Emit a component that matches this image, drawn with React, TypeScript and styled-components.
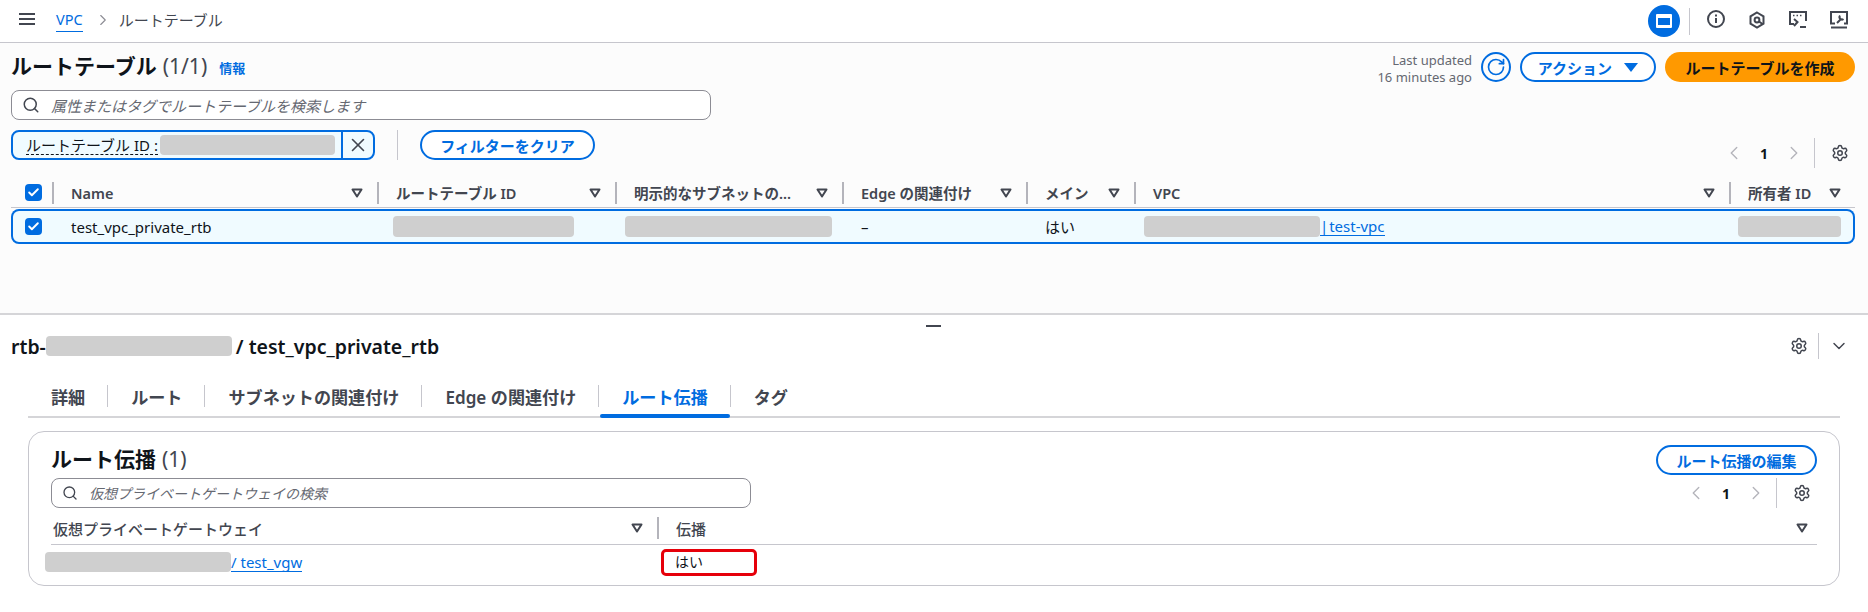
import React from 'react';
import styled, { createGlobalStyle } from 'styled-components';
import { Search, Settings, ChevronLeft, ChevronRight, ChevronDown, X, RotateCw, Check } from 'lucide-react';

const GlobalStyle = createGlobalStyle`
  html, body { margin: 0; padding: 0; background: #fff; overflow: hidden; }
  body { font-family: "Noto Sans", "Noto Sans CJK JP", sans-serif; color: #0f141a; }
  * { box-sizing: border-box; }
`;

const Page = styled.div`
  width: 1868px;
  height: 612px;
  display: flex;
  flex-direction: column;
`;

// Top bar
const TopBar = styled.header`
  height: 43px;
  flex: none;
  display: flex;
  align-items: center;
  padding: 0 18px 3px 19px;
  background: #fff;
  border-bottom: 1px solid #c6c6cd;
`;

const Burger = styled.div`
  width: 16px;
  height: 12px;
  border-top: 2px solid #424650;
  border-bottom: 2px solid #424650;
  position: relative;
  margin: -2px 21px 0 0;
  &::after {
    content: '';
    position: absolute;
    left: 0;
    right: 0;
    top: 3px;
    height: 2px;
    background: #424650;
  }
`;

const Crumb = styled.a`
  font-size: 14.5px;
  color: #006ce0;
  padding-bottom: 2px;
  border-bottom: 1px solid #006ce0;
  margin-top: 2px;
`;

const CrumbCurrent = styled.span`
  font-size: 15px;
  color: #424650;
`;

const CrumbSep = styled.span`
  display: flex;
  color: #8c8c94;
  margin: 0 7px 0 11px;
`;

const Spacer = styled.div`
  flex: 1;
`;

const PanelToggle = styled.div`
  width: 32px;
  height: 32px;
  border-radius: 50%;
  background: #006ce0;
  display: flex;
  align-items: center;
  justify-content: center;
  margin-top: 3px;
  &::before {
    content: '';
    box-sizing: border-box;
    width: 16px;
    height: 14px;
    border: 2px solid #fff;
    border-top-width: 4px;
    border-bottom-width: 3px;
    border-radius: 1px;
  }
`;

const NavDivider = styled.div`
  width: 1px;
  height: 27px;
  background: #c6c6cd;
  margin: 3px 15px 0 9px;
`;

const NavIcons = styled.div`
  display: flex;
  gap: 19px;
  color: #424650;
`;

const NavIcon = styled.svg`
  width: 22px;
  height: 22px;
  fill: none;
  stroke: #424650;
  stroke-width: 2;
`;

// Upper panel
const ListPanel = styled.section`
  height: 272px;
  flex: none;
  background: #fcfcfc;
  border-bottom: 2px solid #d5d5d8;
  padding: 9px 13px 0 11px;
`;

const HeadRow = styled.div`
  display: flex;
  align-items: flex-start;
  height: 30px;
`;

const Title = styled.h1`
  margin: 0;
  font-size: 21px;
  line-height: 28px;
  font-weight: 700;
  color: #0f141a;
`;

const Count = styled.span`
  font-weight: 400;
  color: #424650;
  margin-left: 6px;
`;

const InfoLink = styled.a`
  font-size: 13px;
  font-weight: 700;
  color: #006ce0;
  margin: 6px 0 0 12px;
`;

const Updated = styled.div`
  font-size: 13px;
  line-height: 17px;
  color: #656871;
  text-align: right;
  margin-right: 9px;
`;

const RoundIcon = styled.div`
  width: 30px;
  height: 30px;
  border: 2px solid #006ce0;
  border-radius: 50%;
  color: #006ce0;
  display: flex;
  align-items: center;
  justify-content: center;
  margin-right: 9px;
`;

const OutlineButton = styled.button<{ $width: number }>`
  width: ${({ $width }) => $width}px;
  height: 30px;
  flex: none;
  border: 2px solid #006ce0;
  border-radius: 20px;
  background: #fff;
  color: #006ce0;
  font: 600 15px "Noto Sans", "Noto Sans CJK JP", sans-serif;
  display: inline-flex;
  align-items: center;
  justify-content: center;
  gap: 12px;
  padding: 0;
`;

const PrimaryButton = styled.button`
  width: 190px;
  height: 30px;
  margin-left: 9px;
  border: none;
  border-radius: 20px;
  background: #ff9900;
  color: #0f141a;
  font: 600 15px "Noto Sans", "Noto Sans CJK JP", sans-serif;
`;

const FilledCaret = styled.span`
  width: 0;
  height: 0;
  border-left: 7px solid transparent;
  border-right: 7px solid transparent;
  border-top: 9px solid #006ce0;
`;

const SearchBox = styled.div<{ $top: number }>`
  width: 700px;
  height: 30px;
  margin-top: ${({ $top }) => $top}px;
  border: 1.5px solid #8c8c94;
  border-radius: 8px;
  background: #fff;
  display: flex;
  align-items: center;
  gap: 11px;
  padding: 0 10px;
  color: #424650;
`;

const Placeholder = styled.span<{ $size: number }>`
  font-size: ${({ $size }) => $size}px;
  font-style: italic;
  color: #656871;
`;

const FilterRow = styled.div`
  display: flex;
  align-items: flex-start;
  margin-top: 10px;
  height: 51px;
`;

const Token = styled.div`
  width: 364px;
  height: 30px;
  display: flex;
  border: 2px solid #006ce0;
  border-radius: 8px;
  background: #f0fbff;
  overflow: hidden;
`;

const TokenLabel = styled.div`
  flex: 1;
  display: flex;
  align-items: center;
  padding-left: 13px;
  font-size: 15px;
  color: #0f141a;
`;

const Dotted = styled.span`
  border-bottom: 1px dashed #0f141a;
  line-height: 18px;
  white-space: nowrap;
  margin-right: 2px;
`;

const TokenClose = styled.div`
  width: 32px;
  border-left: 2px solid #006ce0;
  display: flex;
  align-items: center;
  justify-content: center;
  color: #424650;
`;

const FilterDivider = styled.div`
  width: 1px;
  height: 30px;
  background: #c6c6cd;
  margin: 0 22px;
`;

const Redact = styled.span<{ $width: number; $height?: number }>`
  display: inline-block;
  flex: none;
  width: ${({ $width }) => $width}px;
  height: ${({ $height }) => $height || 21}px;
  background: #cfcfcf;
  border-radius: 4px;
  vertical-align: middle;
`;

const TitleRedact = styled(Redact)`
  margin-right: 4px;
`;

const Pager = styled.div<{ $top: number }>`
  display: flex;
  align-items: center;
  height: 30px;
  margin: ${({ $top }) => $top}px 6px 0 0;
  color: #b4b4bb;
`;

const PageNum = styled.span`
  font-size: 14px;
  font-weight: 700;
  color: #0f141a;
  margin: 0 15px;
`;

const PagerDivider = styled.div`
  width: 1px;
  height: 30px;
  background: #c6c6cd;
  margin: 0 16px 0 9px;
`;

const GearIcon = styled(Settings)`
  color: #424650;
  flex: none;
`;

// Table
const Grid = styled.div<{ $columns: string }>`
  display: grid;
  grid-template-columns: ${({ $columns }) => $columns};
  align-items: center;
`;

const HeadGrid = styled(Grid)`
  height: 27px;
  border-bottom: 1px solid #c6c6cd;
  padding-bottom: 3px;
`;

const HeadCell = styled.div`
  display: flex;
  align-items: center;
  justify-content: space-between;
  height: 22px;
  padding: 0 14px 0 17px;
  font-size: 14.5px;
  font-weight: 600;
  color: #424650;
  white-space: nowrap;
  border-left: 2px solid #b4b4bb;
`;

const CheckCell = styled.div`
  display: flex;
  align-items: center;
  padding-left: 14px;
`;

const CheckBox = styled.span`
  width: 17px;
  height: 17px;
  border-radius: 4px;
  background: #006ce0;
  color: #fff;
  display: flex;
  align-items: center;
  justify-content: center;
`;

const RowGrid = styled(Grid)`
  height: 35px;
  margin-top: 1px;
  border-radius: 8px;
  background: #f0fbff;
  box-shadow: inset 0 0 0 2px #006ce0;
`;

const RowCell = styled.div<{ $pad?: number }>`
  display: flex;
  align-items: center;
  padding-left: ${({ $pad }) => ($pad === undefined ? 19 : $pad)}px;
  font-size: 15px;
  color: #0f141a;
  white-space: nowrap;
`;

const Link = styled.a`
  color: #006ce0;
  font-size: 15px;
  border-bottom: 1px solid #006ce0;
  line-height: 18px;
`;

const VpcLink = styled(Link)`
  word-spacing: -3px;
`;

// Lower panel
const Handle = styled.div`
  width: 15px;
  height: 2px;
  background: #424650;
  margin: 10px auto 0;
  flex: none;
  position: relative;
  left: -1px;
`;

const Detail = styled.section`
  flex: 1;
  padding: 0 28px 0 11px;
`;

const DetailHead = styled.div`
  display: flex;
  align-items: center;
  height: 34px;
  margin-top: 2px;
`;

const DetailTitle = styled.h2`
  margin: 0;
  font-size: 19.5px;
  font-weight: 600;
  display: flex;
  align-items: center;
  color: #0f141a;
`;

const DetailTools = styled.div`
  display: flex;
  align-items: center;
  color: #424650;
  margin-right: -9px;
`;

const ToolDivider = styled.div`
  width: 1px;
  height: 26px;
  background: #c6c6cd;
  margin: 0 10px;
`;

const Tabs = styled.nav`
  display: flex;
  height: 41px;
  margin: 14px 0 0 17px;
  border-bottom: 2px solid #d5d5d8;
`;

const Tab = styled.div<{ $active?: boolean; $last?: boolean }>`
  position: relative;
  height: 39px;
  padding: 0 23px;
  display: flex;
  align-items: center;
  font-size: 17.1px;
  font-weight: 600;
  color: ${({ $active }) => ($active ? '#006ce0' : '#424650')};
  white-space: nowrap;
  &::before {
    content: '';
    display: ${({ $last }) => ($last ? 'none' : 'block')};
    position: absolute;
    right: 0;
    top: 8px;
    height: 22px;
    width: 1px;
    background: #c6c6cd;
  }
  &::after {
    content: '';
    display: ${({ $active }) => ($active ? 'block' : 'none')};
    position: absolute;
    left: 1px;
    right: 1px;
    bottom: -2px;
    height: 4px;
    border-radius: 2px;
    background: #006ce0;
  }
`;

const Card = styled.div`
  height: 155px;
  margin: 13px 0 0 17px;
  border: 1px solid #c6c6cd;
  border-radius: 16px;
  padding: 13px 22px 0 22px;
`;

const CardHead = styled.div`
  display: flex;
  align-items: flex-start;
  height: 33px;
`;

const CardTitle = styled.h3`
  margin: 0;
  font-size: 21px;
  line-height: 28px;
  font-weight: 700;
`;

const CardTools = styled.div`
  display: flex;
  align-items: center;
  justify-content: space-between;
  height: 30px;
`;

const CardHeadGrid = styled(Grid)`
  height: 37px;
  padding-top: 4px;
  border-bottom: 1px solid #c6c6cd;
`;

const CardHeadCell = styled.div<{ $sep?: boolean }>`
  display: flex;
  align-items: center;
  justify-content: space-between;
  height: 22px;
  padding: ${({ $sep }) => ($sep ? '0 9px 0 17px' : '0 14px 0 2px')};
  font-size: 15px;
  font-weight: 500;
  color: #424650;
  border-left: ${({ $sep }) => ($sep ? '2px solid #b4b4bb' : 'none')};
`;

const CardRow = styled(Grid)`
  height: 33px;
  padding-top: 1px;
`;

const VgwCell = styled.div`
  display: flex;
  align-items: center;
  margin-left: -6px;
`;

const Highlight = styled.div`
  width: 96px;
  height: 27px;
  margin-left: 4px;
  border: 3px solid #e6000a;
  border-radius: 5px;
  padding: 0 0 3px 11px;
  display: flex;
  align-items: center;
  font-size: 14px;
  color: #0f141a;
`;

const Caret = () => (
  <svg width="12" height="10" viewBox="0 0 12 10" fill="none" stroke="currentColor" strokeWidth="2" style={{ flex: 'none' }}>
    <path d="M1.5 1.5h9L6 8.5z" strokeLinejoin="round" />
  </svg>
);

const ListColumns = '41px 325px 238px 227px 184px 108px 595px 126px';
const CardColumns = '606px 1fr';

const TableHeads = ['Name', 'ルートテーブル ID', '明示的なサブネットの...', 'Edge の関連付け', 'メイン', 'VPC', '所有者 ID'];

const App: React.FC = () => {
  return (
    <Page>
      <GlobalStyle />
      <TopBar>
        <Burger />
        <Crumb>VPC</Crumb>
        <CrumbSep><ChevronRight size={18} strokeWidth={1.5} /></CrumbSep>
        <CrumbCurrent>ルートテーブル</CrumbCurrent>
        <Spacer />
        <PanelToggle />
        <NavDivider />
        <NavIcons>
          {/* info */}
          <NavIcon viewBox="0 0 22 22">
            <circle cx="11" cy="10" r="8" />
            <path d="M11 9v5M11 5.5V7.5" />
          </NavIcon>
          {/* hexagon */}
          <NavIcon viewBox="0 0 22 22">
            <path d="M11 3.5l6.5 3.8v7.4L11 18.5l-6.5-3.8V7.3z" />
            <circle cx="11" cy="11" r="2.4" />
            <path d="M13 12.5l3.5 2.5" />
          </NavIcon>
          {/* terminal */}
          <NavIcon viewBox="0 0 22 22">
            <path d="M7 15H3V3h16v9" />
            <path d="M6 6.5h1.5M9.5 6.5H11M13 6.5h1.5" strokeWidth="1.5" />
            <path d="M7 10l3.5 3L7 17M13 18h6" />
          </NavIcon>
          {/* monitor with wrench */}
          <NavIcon viewBox="0 0 22 22">
            <path d="M7 14.5H3V3h16v11.5h-3" />
            <path d="M3 18.5h16" />
            <path d="M9 14l4.5-4.5M12 6.5a2.5 2.5 0 0 0 3.5 3.5" />
          </NavIcon>
        </NavIcons>
      </TopBar>

      <ListPanel>
        <HeadRow>
          <Title>ルートテーブル<Count>(1/1)</Count></Title>
          <InfoLink>情報</InfoLink>
          <Spacer />
          <Updated>Last updated<br />16 minutes ago</Updated>
          <RoundIcon><RotateCw size={20} strokeWidth={2} /></RoundIcon>
          <OutlineButton $width={136}>アクション<FilledCaret /></OutlineButton>
          <PrimaryButton>ルートテーブルを作成</PrimaryButton>
        </HeadRow>

        <SearchBox $top={8}>
          <Search size={18} strokeWidth={2} />
          <Placeholder $size={15}>属性またはタグでルートテーブルを検索します</Placeholder>
        </SearchBox>

        <FilterRow>
          <Token>
            <TokenLabel>
              <Dotted>ルートテーブル ID :</Dotted>
              <Redact $width={175} $height={20} />
            </TokenLabel>
            <TokenClose><X size={22} strokeWidth={1.75} /></TokenClose>
          </Token>
          <FilterDivider />
          <OutlineButton $width={175}>フィルターをクリア</OutlineButton>
          <Spacer />
          <Pager $top={8}>
            <ChevronLeft size={22} strokeWidth={1.5} />
            <PageNum>1</PageNum>
            <ChevronRight size={22} strokeWidth={1.5} />
            <PagerDivider />
            <GearIcon size={18} strokeWidth={2} />
          </Pager>
        </FilterRow>

        <HeadGrid $columns={ListColumns}>
          <CheckCell>
            <CheckBox><Check size={13} strokeWidth={3.5} /></CheckBox>
          </CheckCell>
          {TableHeads.map(head => (
            <HeadCell key={head}>
              {head}
              <Caret />
            </HeadCell>
          ))}
        </HeadGrid>
        <RowGrid $columns={ListColumns}>
          <CheckCell>
            <CheckBox><Check size={13} strokeWidth={3.5} /></CheckBox>
          </CheckCell>
          <RowCell>test_vpc_private_rtb</RowCell>
          <RowCell $pad={16}><Redact $width={181} /></RowCell>
          <RowCell $pad={10}><Redact $width={207} /></RowCell>
          <RowCell>–</RowCell>
          <RowCell>はい</RowCell>
          <RowCell $pad={10}>
            <Redact $width={176} />
            <VpcLink>| test-vpc</VpcLink>
          </RowCell>
          <RowCell $pad={9}><Redact $width={103} /></RowCell>
        </RowGrid>
      </ListPanel>

      <Handle />

      <Detail>
        <DetailHead>
          <DetailTitle>rtb-<TitleRedact $width={186} $height={20} />/ test_vpc_private_rtb</DetailTitle>
          <Spacer />
          <DetailTools>
            <GearIcon size={18} strokeWidth={2} />
            <ToolDivider />
            <ChevronDown size={20} strokeWidth={1.75} />
          </DetailTools>
        </DetailHead>

        <Tabs>
          <Tab>詳細</Tab>
          <Tab>ルート</Tab>
          <Tab>サブネットの関連付け</Tab>
          <Tab>Edge の関連付け</Tab>
          <Tab $active>ルート伝播</Tab>
          <Tab $last>タグ</Tab>
        </Tabs>

        <Card>
          <CardHead>
            <CardTitle>ルート伝播<Count>(1)</Count></CardTitle>
            <Spacer />
            <OutlineButton $width={161}>ルート伝播の編集</OutlineButton>
          </CardHead>
          <CardTools>
            <SearchBox $top={0}>
              <Search size={16} strokeWidth={2} />
              <Placeholder $size={14}>仮想プライベートゲートウェイの検索</Placeholder>
            </SearchBox>
            <Pager $top={0}>
              <ChevronLeft size={22} strokeWidth={1.5} />
              <PageNum>1</PageNum>
              <ChevronRight size={22} strokeWidth={1.5} />
              <PagerDivider />
              <GearIcon size={18} strokeWidth={2} />
            </Pager>
          </CardTools>
          <CardHeadGrid $columns={CardColumns}>
            <CardHeadCell>仮想プライベートゲートウェイ<Caret /></CardHeadCell>
            <CardHeadCell $sep>伝播<Caret /></CardHeadCell>
          </CardHeadGrid>
          <CardRow $columns={CardColumns}>
            <VgwCell>
              <Redact $width={186} $height={20} />
              <Link>/ test_vgw</Link>
            </VgwCell>
            <Highlight>はい</Highlight>
          </CardRow>
        </Card>
      </Detail>
    </Page>
  );
};

export default App;
